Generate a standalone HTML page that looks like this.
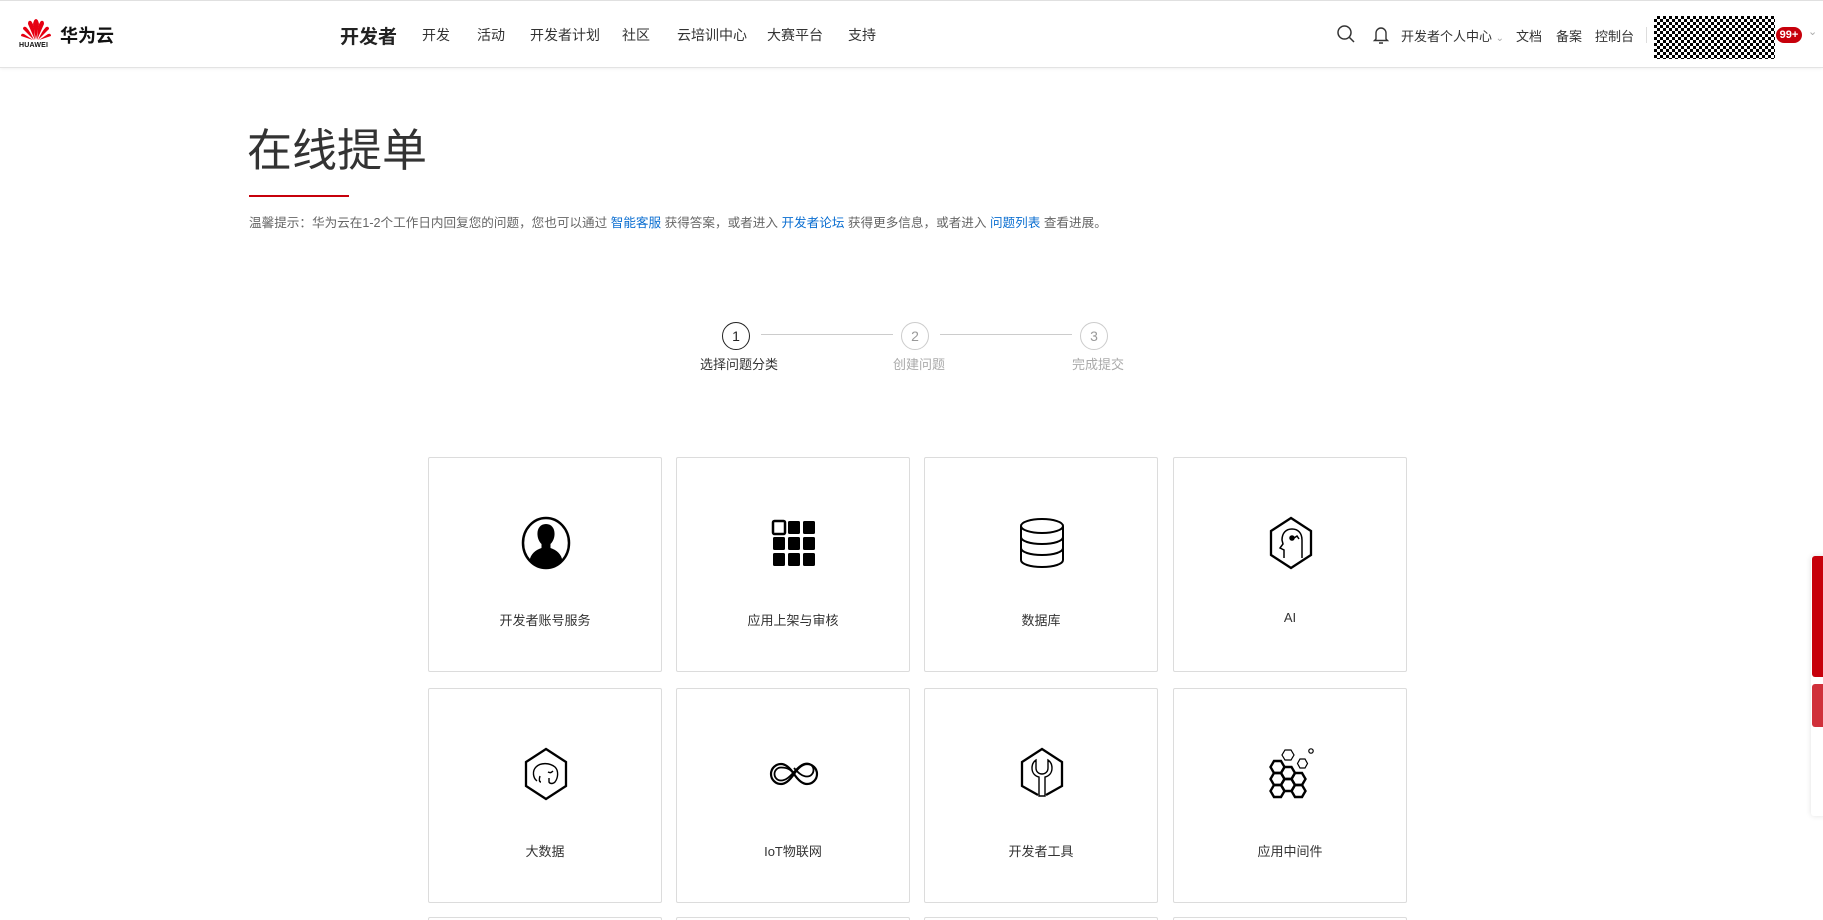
<!DOCTYPE html>
<html style="width:1823px;height:920px;overflow:hidden"><head><meta charset="utf-8"><style>
*{margin:0;padding:0;box-sizing:border-box}
body{width:1823px;height:920px;overflow:hidden;background:#fff;font-family:"Liberation Sans","Noto Sans CJK SC",sans-serif;color:#333;position:relative}
#w{position:absolute;left:0;top:0;width:1823px;height:920px;overflow:hidden}
.a{position:absolute;white-space:nowrap}
.hdr{position:absolute;left:0;top:0;width:1823px;height:68px;border-top:1px solid #e0e0e0;border-bottom:1px solid #e3e3e3;box-shadow:0 1px 3px rgba(0,0,0,.06)}
.nav{font-size:14px;color:#333;top:25px}
.card{position:absolute;width:234px;height:215px;border:1px solid #dcdcdc;border-radius:2px;background:#fff}
.card svg{position:absolute;left:90px;top:58px}
.card .t{position:absolute;left:0;right:0;top:152px;text-align:center;font-size:13px;color:#333}
.step{position:absolute;width:28px;height:28px;border-radius:50%;border:1px solid #ccc;text-align:center;line-height:26px;font-size:14px;color:#999}
.lbl{position:absolute;font-size:13px;color:#aaa;top:354px}
</style></head><body><div id="w">
<div class="hdr"></div>
<svg class="a" style="left:20px;top:18px" width="32" height="24" viewBox="0 0 32 24">
<g fill="#e60012">
<path d="M16 22 L13 6 Q14 1 16 1 Q18 1 19 6Z"/>
<path d="M15 22 L8 6 Q8 2 11 3 Q13 5 14 10Z" />
<path d="M17 22 L24 6 Q24 2 21 3 Q19 5 18 10Z"/>
<path d="M14 22 L3 11 Q3 8 6 9 Q10 13 14 22Z"/>
<path d="M18 22 L29 11 Q29 8 26 9 Q22 13 18 22Z"/>
<path d="M13 22 L1 18 Q1 15 4 16Z"/>
<path d="M19 22 L31 18 Q31 15 28 16Z"/>
</g></svg>
<div class="a" style="left:19px;top:42px;font-size:7px;font-weight:bold;color:#111;letter-spacing:.2px">HUAWEI</div>
<div class="a" style="left:60px;top:22px;font-size:18px;font-weight:bold;color:#111">华为云</div>
<div class="a" style="left:340px;top:22px;font-size:19px;font-weight:bold;color:#222">开发者</div>
<div class="a nav" style="left:422px">开发</div>
<div class="a nav" style="left:477px">活动</div>
<div class="a nav" style="left:530px">开发者计划</div>
<div class="a nav" style="left:622px">社区</div>
<div class="a nav" style="left:677px">云培训中心</div>
<div class="a nav" style="left:767px">大赛平台</div>
<div class="a nav" style="left:848px">支持</div>
<svg class="a" style="left:1336px;top:24px" width="20" height="20" viewBox="0 0 20 20"><circle cx="8.5" cy="8.5" r="6.5" fill="none" stroke="#333" stroke-width="1.5"/><path d="M13.5 13.5L18 18" stroke="#333" stroke-width="1.5"/></svg>
<svg class="a" style="left:1372px;top:25px" width="18" height="20" viewBox="0 0 18 20"><path d="M4 14V8a5 5 0 0 1 10 0v6l1.5 1.5h-13Z M7 18h4" fill="none" stroke="#333" stroke-width="1.4"/></svg>
<div class="a nav" style="left:1401px;font-size:13px;top:26px">开发者个人中心 <span style="color:#aaa;font-size:10px">⌄</span></div>
<div class="a nav" style="left:1516px;font-size:13px;top:26px">文档</div>
<div class="a nav" style="left:1556px;font-size:13px;top:26px">备案</div>
<div class="a nav" style="left:1595px;font-size:13px;top:26px">控制台</div>
<div class="a" style="left:1646px;top:27px;width:1px;height:16px;background:#ddd"></div>
<div class="a" style="left:1654px;top:16px;width:121px;height:43px;background-color:#fff;background-image:conic-gradient(#000 25%,#fff 0 50%,#000 0 75%,#fff 0);background-size:6px 6px"></div>
<div class="a" style="left:1776px;top:27px;width:26px;height:16px;border-radius:8px;background:#c7000b;color:#fff;font-size:11px;font-weight:bold;text-align:center;line-height:16px">99+</div>
<div class="a" style="left:1808px;top:25px;color:#aaa;font-size:11px">⌄</div>

<div class="a" style="left:247px;top:114px;font-size:45px;color:#333">在线提单</div>
<div class="a" style="left:249px;top:195px;width:100px;height:1.5px;background:#c7000b"></div>
<div class="a" style="left:249px;top:212px;font-size:12.6px;color:#666">温馨提示：华为云在1-2个工作日内回复您的问题，您也可以通过 <span style="color:#0a6ed1">智能客服</span> 获得答案，或者进入 <span style="color:#0a6ed1">开发者论坛</span> 获得更多信息，或者进入 <span style="color:#0a6ed1">问题列表</span> 查看进展。</div>

<div class="step" style="left:722px;top:322px;border-color:#222;color:#222">1</div>
<div class="a" style="left:761px;top:334px;width:132px;height:1px;background:#ccc"></div>
<div class="step" style="left:901px;top:322px">2</div>
<div class="a" style="left:940px;top:334px;width:132px;height:1px;background:#ccc"></div>
<div class="step" style="left:1080px;top:322px">3</div>
<div class="lbl" style="left:700px;color:#333">选择问题分类</div>
<div class="lbl" style="left:893px">创建问题</div>
<div class="lbl" style="left:1072px">完成提交</div>

<div class="card" style="left:428px;top:457px"><svg width="54" height="54" viewBox="0 0 54 54"><ellipse cx="27" cy="27" rx="23" ry="25" fill="none" stroke="#000" stroke-width="2.5"/><path d="M27 8c-6 0-9 5-8.5 11 .3 4 2 7 4 9v4c-6 2-11 6-12 13a25 25 0 0 0 33 0c-1-7-6-11-12-13v-4c2-2 3.7-5 4-9 .5-6-2.5-11-8.5-11Z"/></svg><div class="t">开发者账号服务</div></div>
<div class="card" style="left:676px;top:457px"><svg width="54" height="54" viewBox="0 0 54 54"><g fill="#000"><rect x="6" y="5" width="12" height="13" rx="1.5" fill="none" stroke="#000" stroke-width="2.5"/><rect x="21" y="5" width="12" height="13" rx="1.5"/><rect x="36" y="5" width="12" height="13" rx="1.5"/><rect x="6" y="21" width="12" height="13" rx="1.5"/><rect x="21" y="21" width="12" height="13" rx="1.5"/><rect x="36" y="21" width="12" height="13" rx="1.5"/><rect x="6" y="37" width="12" height="13" rx="1.5"/><rect x="21" y="37" width="12" height="13" rx="1.5"/><rect x="36" y="37" width="12" height="13" rx="1.5"/></g></svg><div class="t">应用上架与审核</div></div>
<div class="card" style="left:924px;top:457px"><svg width="54" height="54" viewBox="0 0 54 54"><g fill="none" stroke="#000" stroke-width="2"><ellipse cx="27" cy="10" rx="21" ry="7"/><path d="M6 10v34c0 4 9 7 21 7s21-3 21-7V10"/><path d="M6 21c0 4 9 7 21 7s21-3 21-7M6 32c0 4 9 7 21 7s21-3 21-7"/></g></svg><div class="t">数据库</div></div>
<div class="card" style="left:1173px;top:457px"><svg width="54" height="54" viewBox="0 0 54 54"><g fill="none" stroke="#000" stroke-width="2.3"><path d="M27 2 47 15v24L27 52 7 39V15Z"/></g><g fill="none" stroke="#000" stroke-width="1.5"><path d="M20 42V34l-4-2 3-4-1-4c0-7 4-11 10-11s10 4 10 11v18"/><circle cx="28" cy="22" r="2" fill="#000"/><path d="M30 22l3-2 2 3"/></g></svg><div class="t">AI</div></div>

<div class="card" style="left:428px;top:688px"><svg width="54" height="54" viewBox="0 0 54 54"><path d="M27 2 47 15v24L27 52 7 39V15Z" fill="none" stroke="#000" stroke-width="2.3"/><g fill="none" stroke="#000" stroke-width="1.4"><path d="M18 34c-4-3-5-10-1-14 5-5 14-4 19 0 4 4 3 11 0 15-2 2-5 2-6 0v-4M22 35c-2 0-2-3-1-6M34 24c-2 2-3 2-5 1"/></g></svg><div class="t">大数据</div></div>
<div class="card" style="left:676px;top:688px"><svg width="54" height="54" viewBox="0 0 54 54"><g fill="none" stroke="#000" stroke-width="2.2"><path d="M27 27c-4-6-8-10-13-10a10 10 0 0 0 0 20c5 0 9-4 13-10s8-10 13-10a10 10 0 0 1 0 20c-5 0-9-4-13-10Z"/><path d="M27 27c-3-4-6-6.5-13-6.5a6.5 6.5 0 0 0 0 13c5 0 9-4 13-8.5s8-8.5 13-8.5a6.5 6.5 0 0 1 0 13c-5 0-9-4-13-8.5" stroke-width="1.8"/></g></svg><div class="t">IoT物联网</div></div>
<div class="card" style="left:924px;top:688px"><svg width="54" height="54" viewBox="0 0 54 54"><path d="M23 48 7 39V15L27 2l20 13v24l-16 9" fill="none" stroke="#000" stroke-width="2.3"/><path d="M21 13v8c0 4 3 6 6 6s6-2 6-6v-8c3 2 4 5 4 8 0 5-3 8-7 9v19h-6V30c-4-1-7-4-7-9 0-3 1-6 4-8Z" fill="none" stroke="#000" stroke-width="1.4"/></svg><div class="t">开发者工具</div></div>
<div class="card" style="left:1173px;top:688px"><svg width="58" height="58" viewBox="0 0 58 58"><g fill="none" stroke="#000" stroke-width="2.4"><path d="M10 14h7l3.5 6-3.5 6h-7l-3.5-6Z"/><path d="M20.5 20h7l3.5 6-3.5 6h-7L17 26Z"/><path d="M10 26h7l3.5 6-3.5 6h-7l-3.5-6Z"/><path d="M20.5 32h7l3.5 6-3.5 6h-7L17 38Z"/><path d="M31 26h7l3.5 6-3.5 6h-7l-3.5-6Z"/><path d="M10 38h7l3.5 6-3.5 6h-7l-3.5-6Z"/><path d="M31 38h7l3.5 6-3.5 6h-7l-3.5-6Z"/></g><g fill="none" stroke="#000" stroke-width="1.2"><path d="M21 3h6l3 5-3 5h-6l-3-5Z"/><path d="M36 12h5l2.5 4.5-2.5 4.5h-5l-2.5-4.5Z"/><circle cx="47" cy="4" r="2.2"/></g></svg><div class="t">应用中间件</div></div>

<div class="card" style="left:428px;top:917px;height:10px"></div>
<div class="card" style="left:676px;top:917px;height:10px"></div>
<div class="card" style="left:924px;top:917px;height:10px"></div>
<div class="card" style="left:1173px;top:917px;height:10px"></div>

<div class="a" style="left:1811px;top:556px;width:14px;height:260px;background:#fff;box-shadow:0 0 6px rgba(0,0,0,.12);border-radius:3px 0 0 3px"></div>
<div class="a" style="left:1812px;top:556px;width:12px;height:121px;background:#c7000b;border-radius:3px 0 0 3px"></div>
<div class="a" style="left:1812px;top:684px;width:12px;height:43px;background:#d0303a;border-radius:3px 0 0 3px"></div>
</div></body></html>
